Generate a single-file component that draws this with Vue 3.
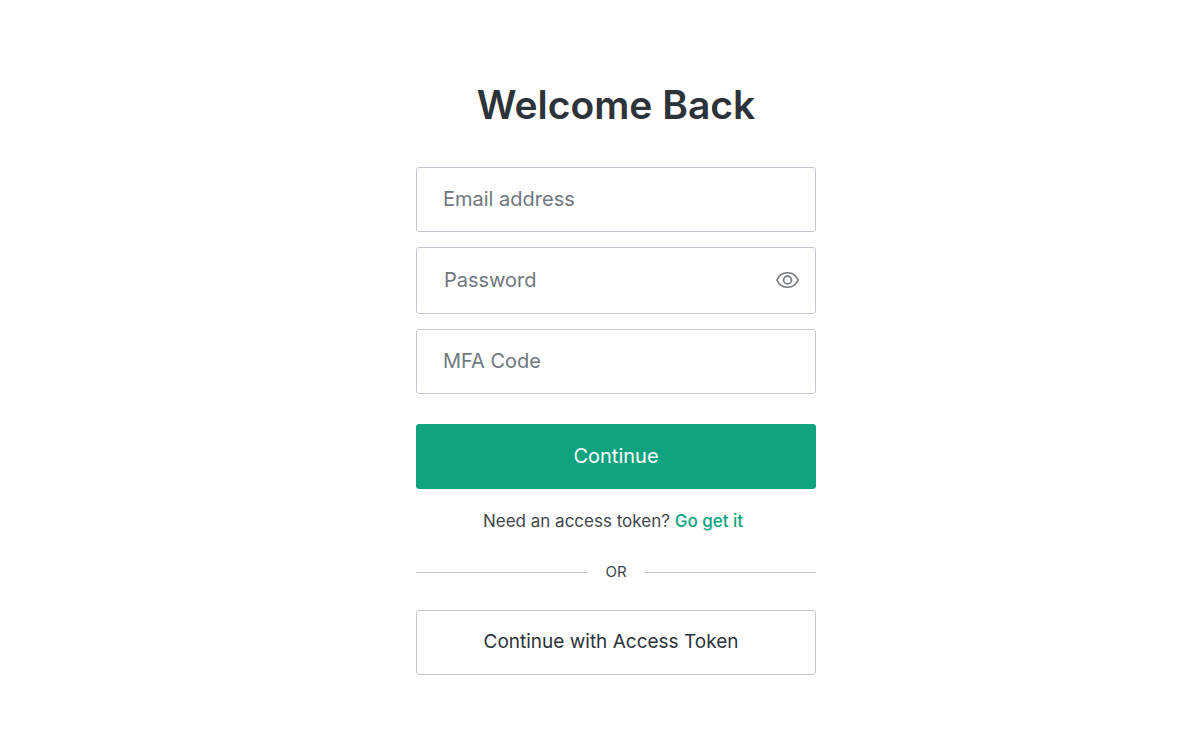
<!--
  LoginForm - Sign-in page with email, password and MFA code
-->

<script setup>
import { ref } from 'vue'

// Form state
const email = ref('')
const password = ref('')
const mfaCode = ref('')
const showPassword = ref(false)

/**
 * Show or hide the password
 */
const togglePassword = () => {
  showPassword.value = !showPassword.value
}
</script>

<template>
  <main class="login-page">
    <section class="login-card">
      <h1 class="title">Welcome Back</h1>

      <form class="login-form" @submit.prevent>
        <input
          v-model="email"
          class="field"
          type="email"
          placeholder="Email address"
          aria-label="Email address"
        />

        <!-- Password with visibility toggle -->
        <div class="password-field">
          <input
            v-model="password"
            class="password-input"
            :type="showPassword ? 'text' : 'password'"
            placeholder="Password"
            aria-label="Password"
          />
          <button
            type="button"
            class="toggle-button"
            :aria-label="showPassword ? 'Hide password' : 'Show password'"
            @click="togglePassword"
          >
            <svg width="23" height="16" viewBox="0 0 23 16" fill="none" stroke="currentColor" stroke-width="1.6">
              <path d="M.9 8C3 3.3 6.9.8 11.5.8S20 3.3 22.1 8C20 12.7 16.1 15.2 11.5 15.2S3 12.7.9 8Z" stroke-linejoin="round" />
              <circle cx="11.5" cy="8" r="3.9" />
            </svg>
          </button>
        </div>

        <input
          v-model="mfaCode"
          class="field"
          type="text"
          inputmode="numeric"
          placeholder="MFA Code"
          aria-label="MFA Code"
        />

        <button type="submit" class="button primary">Continue</button>
      </form>

      <p class="hint">Need an access token? <a href="#" class="hint-link">Go get it</a></p>

      <div class="divider">OR</div>

      <button type="button" class="button secondary">Continue with Access Token</button>
    </section>
  </main>
</template>

<style>
body {
  margin: 0;
  background-color: #fff;
}
</style>

<style scoped>
.login-page {
  display: flex;
  justify-content: center;
  padding: 80px 0 70px 45px;
  font-family: Inter, "Liberation Sans", sans-serif;
  color: #2d333a;
}

.login-page *,
.login-page {
  box-sizing: border-box;
}

.login-card {
  width: 100%;
  max-width: 400px;
}

.title {
  margin: 0 0 37px;
  font-size: 39px;
  line-height: 50px;
  font-weight: 600;
  text-align: center;
}

/* Fields */
.login-form {
  display: flex;
  flex-direction: column;
  gap: 15px;
}

.field,
.password-field {
  width: 100%;
  border: 1px solid #c2c8d0;
  border-radius: 3px;
  background-color: #fff;
}

.field,
.password-input {
  height: 65px;
  padding: 0 26px 2px;
  font-family: inherit;
  font-size: 20px;
  color: #2d333a;
}

.password-field {
  display: flex;
  align-items: center;
  padding-right: 16px;
}

.password-input {
  flex: 1;
  min-width: 0;
  padding-left: 27px;
  border: 0;
  background: none;
  outline: none;
}

.field:focus,
.password-field:focus-within {
  outline: none;
  border-color: #10a37f;
}

.field::placeholder,
.password-input::placeholder {
  color: #6f7780;
  opacity: 1;
}

.toggle-button {
  display: flex;
  padding: 0 0 2px;
  border: 0;
  background: none;
  color: #6f7780;
  cursor: pointer;
}

/* Buttons */
.button {
  width: 100%;
  height: 65px;
  padding: 0 0 2px;
  border: 1px solid #c2c8d0;
  border-radius: 3px;
  font-family: inherit;
  font-size: 20px;
  cursor: pointer;
}

.primary {
  margin-top: 15px;
  border-color: #10a37f;
  background-color: #10a37f;
  color: #fff;
}

.secondary {
  padding-right: 10px;
  background-color: #fff;
  font-size: 19px;
  color: #2d333a;
}

.hint {
  margin: 22px 0 0;
  padding-right: 6px;
  font-size: 17px;
  line-height: 20px;
  text-align: center;
  color: #40464d;
}

.hint-link {
  color: #10a37f;
  font-weight: 500;
  text-decoration: none;
}

/* Divider */
.divider {
  display: flex;
  align-items: center;
  gap: 17px;
  margin: 31px 0 28px;
  font-size: 15px;
  line-height: 20px;
  color: #40464d;
}

.divider::before,
.divider::after {
  content: "";
  flex: 1;
  height: 1px;
  background-color: #c2c8d0;
}
</style>
